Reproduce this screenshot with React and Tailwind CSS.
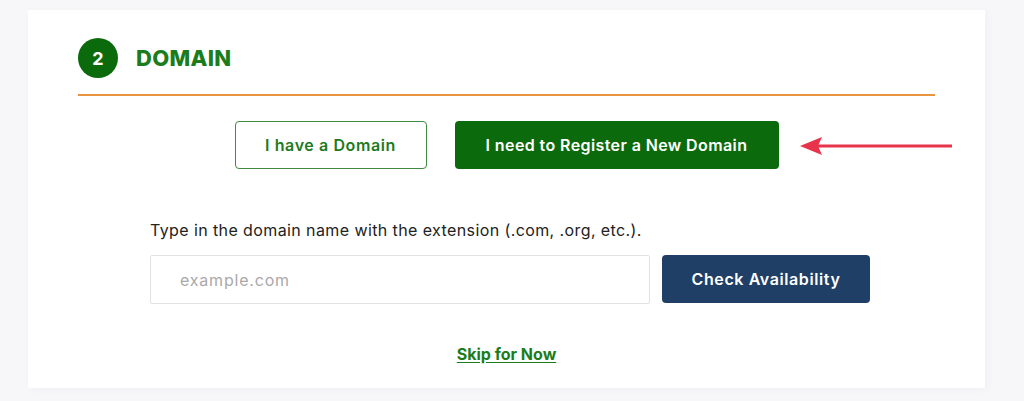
import React from "react";

export default function App() {
  const font = { fontFamily: "Inter, 'Open Sans', sans-serif" };
  return (
    <div className="w-[1024px] h-[401px] bg-[#f7f7fa] overflow-hidden" style={font}>
      <div className="flex h-full">
        <div className="ml-[28px] mt-[10px] w-[957px] h-[378px] bg-white shadow-[2px_2px_8px_rgba(0,0,0,0.03)] px-[50px] pt-[28px]">
          <div className="flex items-center gap-[18px]">
            <div className="w-[40px] h-[40px] rounded-full bg-[#0b6a0b] flex items-center justify-center text-white text-[18px] font-bold">
              2
            </div>
            <div className="text-[22px] font-extrabold text-[#1b7c1b] tracking-[0.3px]">DOMAIN</div>
          </div>
          <div className="mt-[16px] h-[2px] bg-[#e9953f]"></div>
          <div className="relative mt-[25px] flex justify-center gap-[28px]">
            <button className="w-[192px] h-[48px] rounded-[4px] border border-[#3f8a42] text-[#1e7a1e] text-[16px] font-semibold tracking-[0.6px] bg-white">
              I have a Domain
            </button>
            <button className="w-[324px] h-[48px] rounded-[4px] bg-[#0b6a0b] text-white text-[16px] font-semibold tracking-[0.4px]">
              I need to Register a New Domain
            </button>
            <svg className="absolute left-[722px] top-[15px]" width="154" height="20" viewBox="0 0 154 20">
              <path d="M18 10 H152" stroke="#e8344a" strokeWidth="3" />
              <path d="M0 10 L22 1 L18 10 L22 19 Z" fill="#e8344a" />
            </svg>
          </div>
          <div className="ml-[72px] mt-[51px] text-[16px] tracking-[0.4px] text-[#222] leading-[20px]">
            Type in the domain name with the extension (.com, .org, etc.).
          </div>
          <div className="ml-[72px] mt-[15px] flex gap-[12px]">
            <input
              className="w-[500px] h-[49px] border border-[#e2e2e2] rounded-[2px] px-[29px] text-[16px] tracking-[0.8px] outline-none placeholder:text-[#a9a9a9]"
              placeholder="example.com"
              style={font}
            />
            <button className="w-[208px] h-[48px] rounded-[4px] bg-[#1f3f66] text-white text-[16px] font-semibold tracking-[0.6px]">
              Check Availability
            </button>
          </div>
          <div className="mt-[38px] flex justify-center">
            <a href="#" className="text-[16px] font-bold text-[#1b7c1b] underline underline-offset-2">
              Skip for Now
            </a>
          </div>
        </div>
      </div>
    </div>
  );
}
